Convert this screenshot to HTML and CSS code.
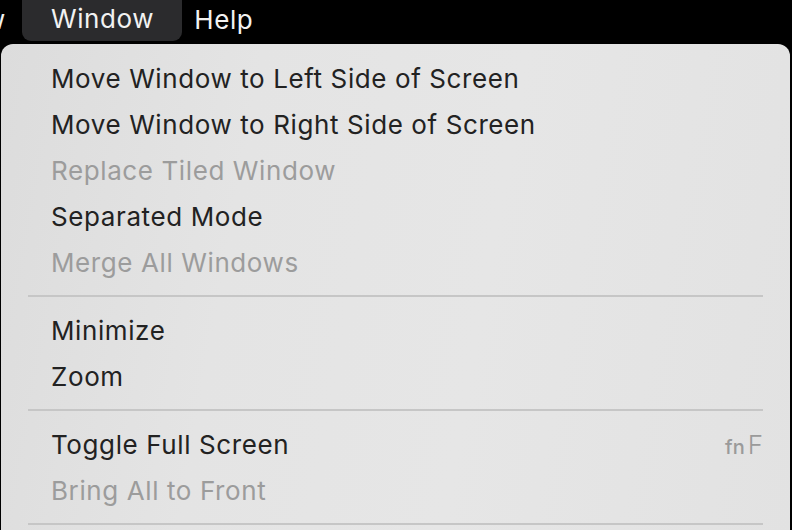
FILE: index.html
```html
<!DOCTYPE html>
<html>
<head>
<meta charset="utf-8">
<link rel="stylesheet" href="styles.css">
</head>
<body>
<div class="menubar">
  <span class="mb-item cut">View</span>
  <span class="mb-item active">Window</span>
  <span class="mb-item">Help</span>
</div>
<div class="menu">
  <div class="row">Move Window to Left Side of Screen</div>
  <div class="row">Move Window to Right Side of Screen</div>
  <div class="row disabled">Replace Tiled Window</div>
  <div class="row">Separated Mode</div>
  <div class="row disabled">Merge All Windows</div>
  <div class="sep"></div>
  <div class="row">Minimize</div>
  <div class="row">Zoom</div>
  <div class="sep"></div>
  <div class="row"><span>Toggle Full Screen</span><span class="key"><span class="fn">fn</span><span class="kf">F</span></span></div>
  <div class="row disabled">Bring All to Front</div>
  <div class="sep"></div>
</div>
</body>
</html>
```
FILE: styles.css
```css
html, body {
  margin: 0;
  padding: 0;
  background: #000;
  width: 792px;
  height: 530px;
  overflow: hidden;
  font-family: Inter, "Liberation Sans", sans-serif;
}
.menubar {
  height: 42px;
  background: #000;
  display: flex;
  align-items: stretch;
  position: relative;
}
.mb-item {
  color: #f2f2f2;
  font-size: 26px;
  letter-spacing: 0.6px;
  display: flex;
  align-items: center;
  padding: 0 0 4px 12px;
}
.mb-item.cut {
  margin-left: -44px;
  padding: 0 16px 4px 0;
  width: 50px;
  justify-content: flex-end;
}
.mb-item.active {
  background: #2b2b2d;
  border-radius: 0 0 9px 9px;
  padding: 0 28px 4px 29px;
  height: 41px;
  box-sizing: border-box;
}
.menu {
  margin: 2px 2px 0 1px;
  height: 500px;
  background: linear-gradient(100deg, #dcdcdc 0%, #e4e4e4 30%, #e6e6e6 60%, #e2e2e2 100%);
  border-radius: 12px 12px 0 0;
  padding-top: 11px;
  box-sizing: border-box;
}
.row {
  height: 46px;
  display: flex;
  align-items: center;
  justify-content: space-between;
  padding: 0 27px 0 50px;
  font-size: 26px;
  color: #222;
  letter-spacing: 0.6px;
}
.row.disabled {
  color: #9c9c9c;
}
.sep {
  height: 2px;
  background: #c6c6c6;
  margin: 10px 27px 10px 27px;
}
.key {
  color: #9a9a9a;
  display: flex;
  align-items: baseline;
  gap: 3px;
  letter-spacing: 0;
}
.fn {
  font-size: 20px;
  font-weight: 500;
}
.kf {
  font-size: 26px;
  font-weight: 300;
}
```
